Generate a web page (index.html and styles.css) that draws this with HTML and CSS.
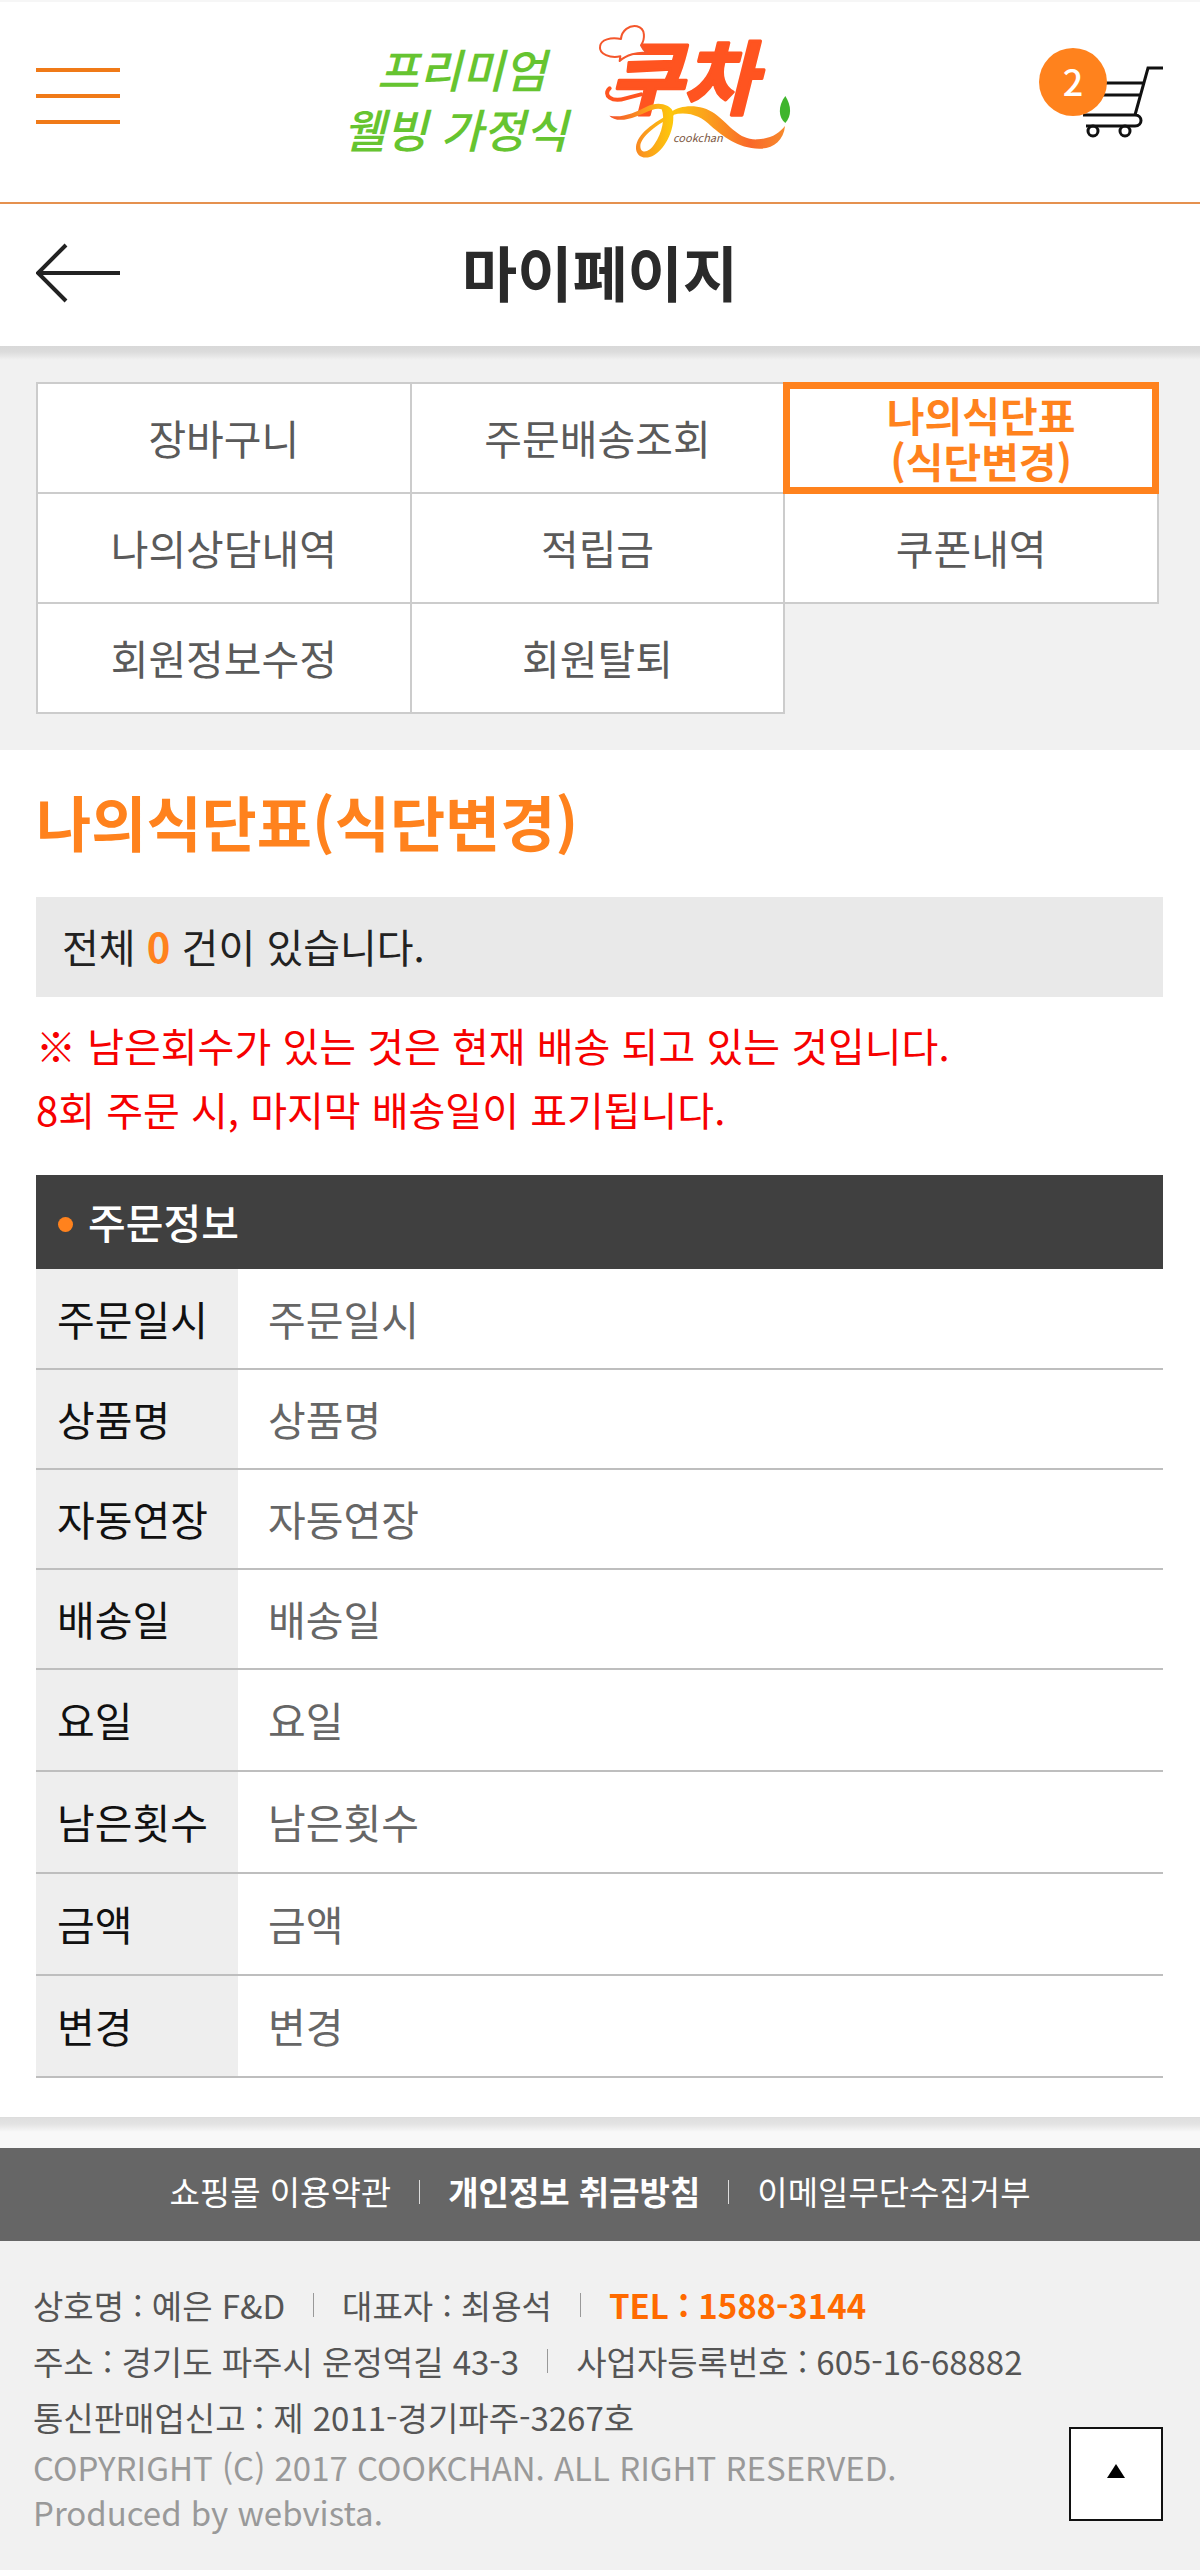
FILE: index.html
```html
<!DOCTYPE html>
<html lang="ko">
<head>
<meta charset="utf-8">
<meta name="viewport" content="width=device-width, initial-scale=1">
<title>마이페이지 - 쿡찬</title>
<link rel="stylesheet" href="styles.css">
</head>
<body>
<header class="site-header">
  <button class="icon-button" type="button" aria-label="메뉴">
    <svg width="84" height="56" viewBox="0 0 84 56" stroke="#f07a18" stroke-width="4"><path d="M0 2h84M0 28h84M0 54h84"/></svg>
  </button>
  <a class="logo" href="#" aria-label="프리미엄 웰빙 가정식 쿡찬">
    <svg width="474" height="170" viewBox="342 10 474 170">
      <defs>
        <linearGradient id="ribbon" gradientUnits="userSpaceOnUse" x1="55" y1="0" x2="582" y2="0">
          <stop offset="0" stop-color="#f4512c"/>
          <stop offset=".2" stop-color="#fb9a1e"/>
          <stop offset=".35" stop-color="#fdc70c"/>
          <stop offset=".55" stop-color="#fba21c"/>
          <stop offset=".8" stop-color="#f9682a"/>
          <stop offset="1" stop-color="#f78a2c"/>
        </linearGradient>
      </defs>
      <g class="logo-tagline">
        <text x="376" y="87">프리미엄</text>
        <text x="342" y="147">웰빙 가정식</text>
      </g>
      <text class="logo-name" x="608" y="107">쿠차</text>
      <g transform="translate(590 10) scale(.33333)">
        <path d="M86 150L88 136C58 142 24 130 27 107C29 85 60 78 90 84C92 58 115 42 138 46C165 52 162 85 150 103C154 112 160 120 168 126C140 122 105 132 86 150Z" fill="#fff" stroke="#f4572c" stroke-width="6" stroke-linejoin="round"/>
        <path d="M56 232C34 252 62 276 104 262L150 250" fill="none" stroke="#ff5420" stroke-width="12" stroke-linecap="round"/>
        <path d="M55 314C95 322 130 305 165 288C200 270 235 280 245 300C255 350 225 410 190 432C160 450 133 435 135 408C138 370 185 335 245 305L250 312C200 340 150 375 148 405C148 430 175 425 190 400C215 365 222 320 212 295C190 285 150 315 110 324C85 330 65 325 55 314Z" fill="url(#ribbon)"/>
        <path d="M240 303C270 280 330 278 372 308C420 345 445 388 500 385C545 382 565 365 582 345C578 390 545 414 505 413C440 412 395 375 360 345C330 315 290 300 245 312Z" fill="url(#ribbon)"/>
        <path d="M583 255C560 285 562 320 583 336C602 315 602 285 583 255Z" fill="#3fb52c"/>
      </g>
      <text class="logo-latin" x="672" y="141">cookchan</text>
    </svg>
  </a>
  <a class="cart" href="#" aria-label="장바구니 2">
    <svg width="124" height="100" viewBox="1039 45 124 100" fill="none" stroke="#111" stroke-width="3">
      <path d="M1163 67H1148L1135 114M1100 82H1143M1100 94H1140M1083 114H1135C1143 114 1143 125 1135 125H1086"/>
      <circle cx="1093" cy="130" r="5"/><circle cx="1125" cy="130" r="5"/>
    </svg>
    <span class="cart-count">2</span>
  </a>
</header>

<div class="page-head">
  <button class="icon-button" type="button" aria-label="뒤로">
    <svg width="84" height="60" viewBox="0 0 84 60" fill="none" stroke="#222" stroke-width="4"><path d="M84 30H3M30 2L2 30L30 58"/></svg>
  </button>
  <h1>마이페이지</h1>
</div>

<nav class="my-nav" aria-label="마이페이지 메뉴">
  <ul>
    <li><a href="#">장바구니</a></li>
    <li><a href="#">주문배송조회</a></li>
    <li><a class="current" href="#" aria-current="page">나의식단표<br>(식단변경)</a></li>
    <li><a href="#">나의상담내역</a></li>
    <li><a href="#">적립금</a></li>
    <li><a href="#">쿠폰내역</a></li>
    <li><a href="#">회원정보수정</a></li>
    <li><a href="#">회원탈퇴</a></li>
  </ul>
</nav>

<main>
  <h2>나의식단표(식단변경)</h2>
  <p class="total">전체 <strong>0</strong> 건이 있습니다.</p>
  <p class="notice">※ 남은회수가 있는 것은 현재 배송 되고 있는 것입니다.<br>8회 주문 시, 마지막 배송일이 표기됩니다.</p>
  <table class="order">
    <caption><span class="dot"></span>주문정보</caption>
    <tbody>
      <tr><th scope="row">주문일시</th><td>주문일시</td></tr>
      <tr><th scope="row">상품명</th><td>상품명</td></tr>
      <tr><th scope="row">자동연장</th><td>자동연장</td></tr>
      <tr><th scope="row">배송일</th><td>배송일</td></tr>
      <tr><th scope="row">요일</th><td>요일</td></tr>
      <tr><th scope="row">남은횟수</th><td>남은횟수</td></tr>
      <tr><th scope="row">금액</th><td>금액</td></tr>
      <tr><th scope="row">변경</th><td>변경</td></tr>
    </tbody>
  </table>
</main>

<footer>
  <ul class="policy">
    <li><a href="#">쇼핑몰 이용약관</a></li>
    <li><a class="strong" href="#">개인정보 취금방침</a></li>
    <li><a href="#">이메일무단수집거부</a></li>
  </ul>
  <div class="company">
    <div>
      <ul class="facts">
        <li>상호명 : 예은 F&amp;D</li>
        <li>대표자 : 최용석</li>
        <li><a class="tel" href="tel:1588-3144">TEL : 1588-3144</a></li>
      </ul>
      <ul class="facts">
        <li>주소 : 경기도 파주시 운정역길 43-3</li>
        <li>사업자등록번호 : 605-16-68882</li>
      </ul>
      <ul class="facts">
        <li>통신판매업신고 : 제 2011-경기파주-3267호</li>
      </ul>
      <p class="copyright">COPYRIGHT (C) 2017 COOKCHAN. ALL RIGHT RESERVED.<br>Produced by webvista.</p>
    </div>
    <button class="to-top" type="button" aria-label="맨 위로">
      <svg width="18" height="14" viewBox="0 0 18 14"><path d="M9 0L18 14H0Z"/></svg>
    </button>
  </div>
</footer>
</body>
</html>
```
FILE: styles.css
```css
* { box-sizing: border-box; }

body {
  margin: 0;
  background: #fff;
  color: #222;
  font: 41px/48px "Noto Sans CJK KR", sans-serif;
}

h1, h2, p, ul { margin: 0; padding: 0; }
ul { list-style: none; }
a { color: inherit; text-decoration: none; }
svg { display: block; }
button { font: inherit; cursor: pointer; }

.icon-button {
  padding: 0;
  border: 0;
  background: none;
}

/* Header */
.site-header {
  display: flex;
  align-items: center;
  justify-content: space-between;
  height: 204px;
  padding: 0 37px 12px 36px;
  border-top: 2px solid #f6f6f6;
  border-bottom: 2px solid #e5914f;
}

.logo-tagline {
  fill: #66c430;
  font-size: 46px;
  font-style: italic;
  font-weight: 500;
}

.logo-name {
  fill: #ff5420;
  stroke: #ff5420;
  stroke-width: 3px;
  stroke-linejoin: round;
  font-size: 80px;
  font-weight: 700;
  font-style: italic;
}

.logo-latin {
  fill: #7a5540;
  font-size: 11px;
  font-style: italic;
}

.cart { position: relative; }

.cart-count {
  position: absolute;
  top: 2px;
  left: 0;
  width: 68px;
  padding-bottom: 4px;
  border-radius: 50%;
  background: #ff821d;
  color: #fff;
  font-size: 36px;
  font-weight: 500;
  line-height: 64px;
  text-align: center;
}

.page-head {
  display: grid;
  grid-template-columns: 84px 1fr 84px;
  align-items: center;
  height: 142px;
  padding: 0 36px 4px;
}

.page-head h1 {
  padding-bottom: 4px;
  color: #2a2a2a;
  font-size: 60px;
  font-weight: 700;
  line-height: 72px;
  text-align: center;
}

/* Account menu */
.my-nav {
  padding: 36px 41px 36px 36px;
  background: linear-gradient(#d8d8d8, #dcdcdc 6px, #f1f1f1 14px);
}

.my-nav ul {
  display: grid;
  grid-template-columns: repeat(3, 1fr);
  grid-auto-rows: 110px;
  padding: 0 2px 2px 0;
}

.my-nav li {
  margin: 0 -2px -2px 0;
  border: 2px solid #ccc;
  background: #fff;
}

.my-nav li:has(.current) {
  border: 0;
  z-index: 1;
}

.my-nav a {
  display: flex;
  align-items: center;
  justify-content: center;
  height: 100%;
  padding-bottom: 2px;
  color: #5a5a5a;
  text-align: center;
}

.my-nav .current {
  border: 7px solid #ff821d;
  color: #ff821d;
  font-weight: 700;
  line-height: 46px;
  padding-left: 20px;
}

/* Meal plan */
main {
  padding: 30px 37px 39px 36px;
  border-bottom: 1px solid #ddd;
}

h2 {
  color: #ff821d;
  font-size: 60px;
  font-weight: 700;
  line-height: 82px;
}

.total {
  margin-top: 35px;
  padding: 0 26px 2px;
  background: #e9e9e9;
  font-size: 40px;
  line-height: 98px;
}

.total strong { color: #ff821d; }

.notice {
  padding: 16px 0 34px;
  color: #f60000;
  font-size: 40px;
  line-height: 64px;
}

.order {
  width: 100%;
  border-collapse: collapse;
  table-layout: fixed;
}

.order caption {
  padding: 0 0 2px 22px;
  background: #404040;
  color: #fff;
  font-weight: 500;
  line-height: 92px;
  text-align: left;
}

.dot {
  display: inline-block;
  width: 15px;
  height: 15px;
  margin-right: 15px;
  border-radius: 50%;
  background: #ff821d;
  vertical-align: 7px;
}

.order tr {
  height: 100px;
  border-bottom: 2px solid #bebebe;
}

.order tr:nth-child(n + 5) { height: 102px; }

.order th {
  width: 202px;
  padding: 0 0 2px 21px;
  background: #eee;
  color: #111;
  font-weight: 400;
  text-align: left;
}

.order td {
  padding: 0 0 2px 30px;
  color: #666;
}

/* Footer */
footer {
  padding-top: 30px;
  background: linear-gradient(#dfdfdf, #e3e3e3 6px, #f8f8f8 14px, #f8f8f8 30px, #f1f1f1 30px);
  font-size: 33px;
}

.policy {
  display: flex;
  justify-content: center;
  padding-bottom: 6px;
  background: #666;
  color: #fff;
  line-height: 87px;
}

.strong { font-weight: 700; }

.policy li, .facts li {
  display: flex;
  align-items: center;
}

.policy li + li::before, .facts li + li::before {
  content: "";
  width: 1px;
  height: 24px;
  margin: 0 28px;
  background: #999;
}

.policy li + li::before { background: #ddd; }

.company {
  display: flex;
  align-items: flex-end;
  justify-content: space-between;
  padding: 36px 37px 38px 33px;
  color: #555;
}

.facts {
  display: flex;
  line-height: 56px;
}

.tel {
  color: #ff6a00;
  font-weight: 700;
}

.copyright {
  color: #999;
  line-height: 45px;
}

.to-top {
  display: flex;
  align-items: center;
  justify-content: center;
  width: 94px;
  height: 94px;
  margin-bottom: 14px;
  padding: 0 0 6px;
  border: 2px solid #111;
  background: #fff;
}
```
